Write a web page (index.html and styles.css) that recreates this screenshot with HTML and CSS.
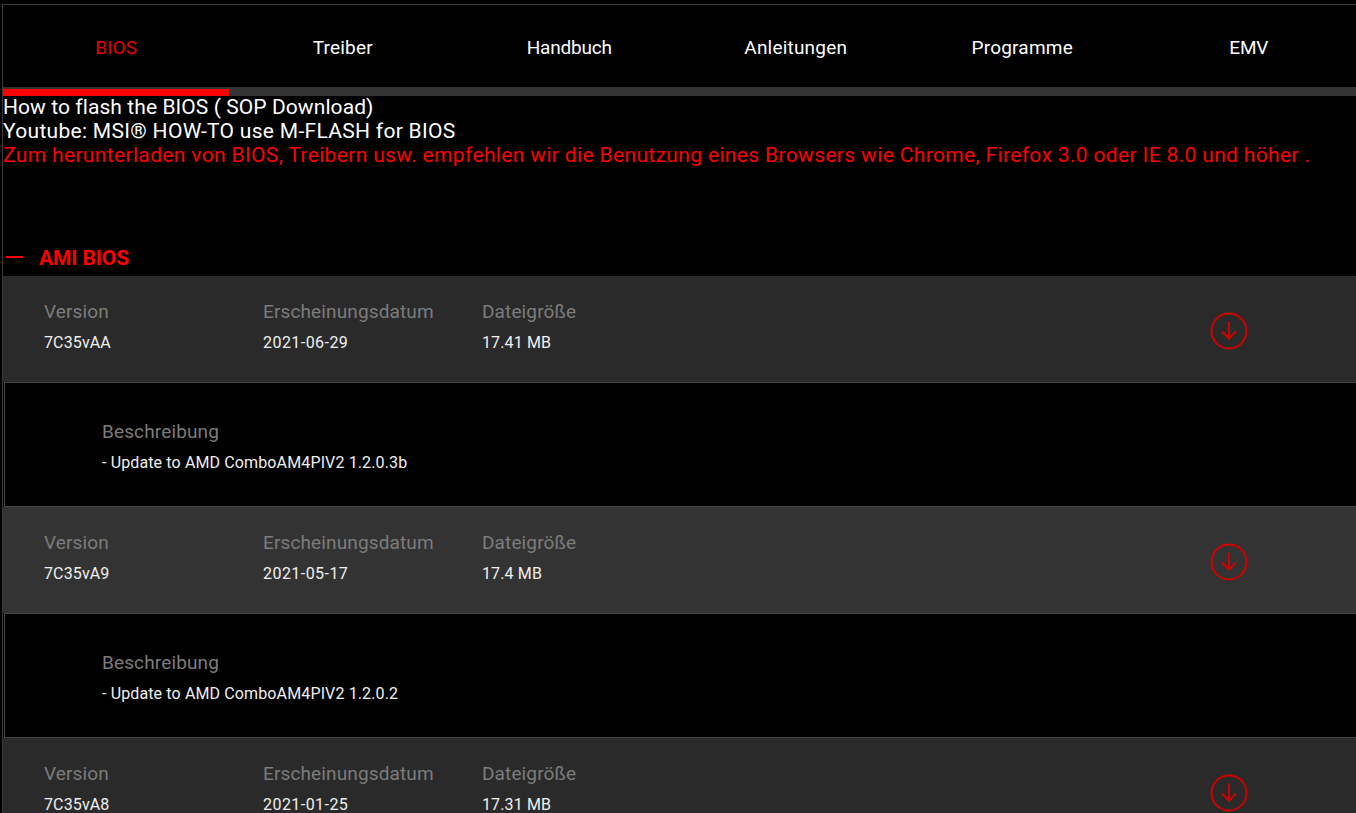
FILE: index.html
```html
<!DOCTYPE html>
<html lang="de">
<head>
<meta charset="utf-8">
<title>BIOS</title>
<link rel="stylesheet" href="styles.css">
</head>
<body>
<div class="page">
  <nav class="tabs">
    <a class="tab active">BIOS</a>
    <a class="tab">Treiber</a>
    <a class="tab tight">Handbuch</a>
    <a class="tab">Anleitungen</a>
    <a class="tab">Programme</a>
    <a class="tab tight">EMV</a>
  </nav>
  <div class="track"><div class="thumb"></div></div>
  <div class="links">
    <p class="first">How to flash the BIOS ( SOP Download)</p>
    <p class="second">Youtube: MSI® HOW-TO use M-FLASH for BIOS</p>
    <p class="warn">Zum herunterladen von BIOS, Treibern usw. empfehlen wir die Benutzung eines Browsers wie Chrome, Firefox 3.0 oder IE 8.0 und höher .</p>
  </div>
  <h2 class="section"><span class="minus"></span>AMI BIOS</h2>
  <section class="row">
    <div class="cell c1"><span class="label">Version</span><span class="value">7C35vAA</span></div>
    <div class="cell c2"><span class="label">Erscheinungsdatum</span><span class="value date">2021-06-29</span></div>
    <div class="cell c3"><span class="label">Dateigröße</span><span class="value">17.41 MB</span></div>
    <svg class="dl" viewBox="0 0 38 38"><circle cx="19" cy="19" r="17.5"/><path d="M19 9.5V26M12 19.5L19 26.5L26 19.5"/></svg>
  </section>
  <section class="desc"><span class="label">Beschreibung</span><span class="value">- Update to AMD ComboAM4PIV2 1.2.0.3b</span></section>
  <section class="row alt">
    <div class="cell c1"><span class="label">Version</span><span class="value">7C35vA9</span></div>
    <div class="cell c2"><span class="label">Erscheinungsdatum</span><span class="value date">2021-05-17</span></div>
    <div class="cell c3"><span class="label">Dateigröße</span><span class="value">17.4 MB</span></div>
    <svg class="dl" viewBox="0 0 38 38"><circle cx="19" cy="19" r="17.5"/><path d="M19 9.5V26M12 19.5L19 26.5L26 19.5"/></svg>
  </section>
  <section class="desc"><span class="label">Beschreibung</span><span class="value">- Update to AMD ComboAM4PIV2 1.2.0.2</span></section>
  <section class="row">
    <div class="cell c1"><span class="label">Version</span><span class="value">7C35vA8</span></div>
    <div class="cell c2"><span class="label">Erscheinungsdatum</span><span class="value date">2021-01-25</span></div>
    <div class="cell c3"><span class="label">Dateigröße</span><span class="value">17.31 MB</span></div>
    <svg class="dl" viewBox="0 0 38 38"><circle cx="19" cy="19" r="17.5"/><path d="M19 9.5V26M12 19.5L19 26.5L26 19.5"/></svg>
  </section>
</div>
</body>
</html>
```
FILE: styles.css
```css
html, body { margin: 0; height: 100%; background: #000; overflow: hidden; }
body { font-family: Roboto, "Liberation Sans", sans-serif; color: #fff; padding: 4px 0 0 2px; box-sizing: border-box; }
.page { border-top: 1px solid #3a3a3a; border-left: 1px solid #3a3a3a; height: 900px; }
.tabs { display: grid; grid-template-columns: repeat(6, 226.5px); height: 82px; }
.tab { display: flex; align-items: center; justify-content: center; font-size: 19px; letter-spacing: 0.2px; color: #fff; padding-top: 2px; box-sizing: border-box; }
.tab.tight { letter-spacing: -0.2px; }
.tab.active { color: #e60000; }
.track { height: 9px; background: #333; display: flex; align-items: flex-end; }
.thumb { width: 226px; height: 7px; background: #f00; }
.links { height: 151px; margin-top: -1px; }
.links p { margin: 0; font-size: 21px; line-height: 24px; letter-spacing: 0.35px; }
.links .first { letter-spacing: 0.08px; }
.links .second { letter-spacing: 0.3px; }
.links .warn { color: #f00; }
.section { margin: 0; height: 30px; display: flex; align-items: center; font-size: 21px; font-weight: 700; letter-spacing: -0.1px; color: #f00; padding-bottom: 6px; box-sizing: border-box; }
.minus { width: 17px; height: 2px; background: #f00; margin: 0 16px 3px 3px; }
.row { height: 106px; background: #2a2a2a; display: flex; position: relative; box-sizing: border-box; padding: 25px 0 0 41px; }
.row.alt { background: #333; }
.cell, .desc { display: flex; flex-direction: column; }
.c1, .c2 { width: 219px; }
.label { font-size: 19px; line-height: 22px; letter-spacing: 0.13px; color: #7c7c7c; }
.value { font-size: 16px; line-height: 20px; letter-spacing: 0.13px; margin-top: 10px; color: #f0f0f0; }
.value.date { letter-spacing: 0.45px; }
.dl { position: absolute; left: 1207px; top: 36px; width: 38px; height: 38px; fill: none; stroke: #d00000; stroke-width: 2; }
.desc { height: 125px; margin-left: 1px; border: 1px solid #444; border-right: 0; background: #000; box-sizing: border-box; padding: 38px 0 0 97px; }
```
